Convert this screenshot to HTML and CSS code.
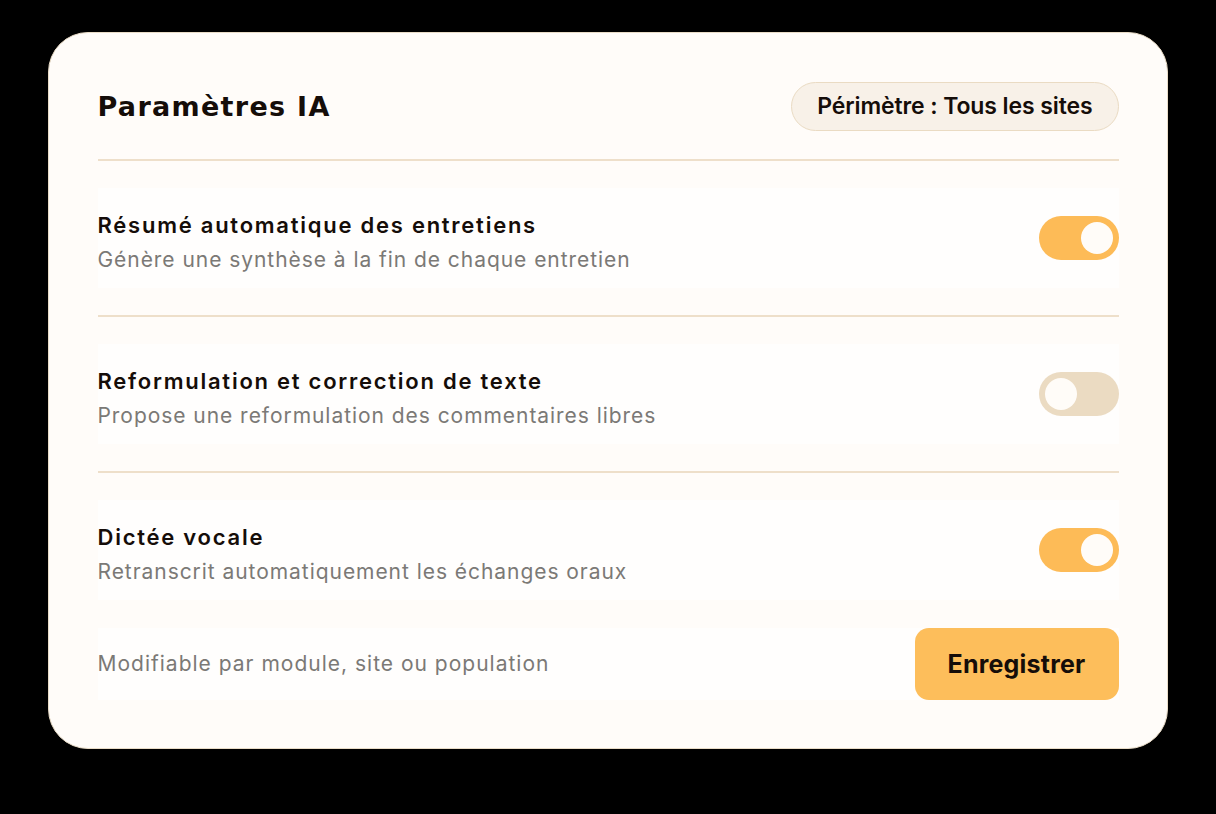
FILE: index.html
```html
<!DOCTYPE html>
<html lang="fr">
<head>
<meta charset="utf-8">
<title>Paramètres IA</title>
<link rel="stylesheet" href="styles.css">
</head>
<body>
<main class="card">
  <header class="header">
    <h1 class="title">Paramètres IA</h1>
    <span class="pill">Périmètre : Tous les sites</span>
  </header>
  <hr class="divider first">
  <section class="row">
    <div class="text">
      <div class="row-title">Résumé automatique des entretiens</div>
      <div class="row-sub">Génère une synthèse à la fin de chaque entretien</div>
    </div>
    <span class="toggle on"><span class="knob"></span></span>
  </section>
  <hr class="divider">
  <section class="row">
    <div class="text">
      <div class="row-title">Reformulation et correction de texte</div>
      <div class="row-sub">Propose une reformulation des commentaires libres</div>
    </div>
    <span class="toggle"><span class="knob"></span></span>
  </section>
  <hr class="divider">
  <section class="row">
    <div class="text">
      <div class="row-title">Dictée vocale</div>
      <div class="row-sub">Retranscrit automatiquement les échanges oraux</div>
    </div>
    <span class="toggle on"><span class="knob"></span></span>
  </section>
  <footer class="footer">
    <span class="note">Modifiable par module, site ou population</span>
    <button class="save">Enregistrer</button>
  </footer>
</main>
</body>
</html>
```
FILE: styles.css
```css
* { box-sizing: border-box; }
html, body { margin: 0; padding: 0; }
body {
  background: #000;
  width: 1216px;
  height: 814px;
  padding: 32px 48px;
  font-family: Inter, "Noto Sans", sans-serif;
  color: #150d09;
}
.card {
  width: 1120px;
  height: 717px;
  background: #fffcf9;
  border: 1.5px solid #e9dcc7;
  border-radius: 40px;
  padding: 48.5px 48.5px;
}
.header {
  display: flex;
  align-items: center;
  justify-content: space-between;
  height: 49px;
}
.title {
  margin: 0;
  font-family: "DejaVu Sans", Inter, sans-serif;
  font-size: 27px;
  font-weight: 700;
  letter-spacing: 1.3px;
}
.pill {
  height: 49px;
  padding: 0 25px;
  display: flex;
  align-items: center;
  border-radius: 999px;
  background: #f8f1e8;
  border: 1.5px solid #eadbc3;
  font-size: 23px;
  font-weight: 600;
  letter-spacing: -0.1px;
}
.divider {
  border: 0;
  height: 2px;
  background: #eedfca;
  margin: 27px 0;
}
.divider.first { margin-top: 28px; }
.row {
  display: flex;
  align-items: center;
  justify-content: space-between;
  height: 100px;
  background: #fffefd;
}
.text { padding-top: 9px; }
.row-title {
  font-size: 22px;
  font-weight: 600;
  line-height: 28px;
  letter-spacing: 1.75px;
}
.row-sub {
  margin-top: 7px;
  font-size: 21px;
  line-height: 28px;
  color: #7b7976;
  letter-spacing: 0.95px;
}
.toggle {
  width: 80px;
  height: 44px;
  border-radius: 22px;
  background: #ebdbc2;
  padding: 6px;
  display: flex;
  justify-content: flex-start;
}
.toggle.on {
  background: #fdbb57;
  justify-content: flex-end;
}
.knob {
  width: 32px;
  height: 32px;
  border-radius: 50%;
  background: #fffcf8;
}
.footer {
  margin-top: 28px;
  height: 72px;
  display: flex;
  align-items: center;
  justify-content: space-between;
  background: #fffefd;
}
.note {
  font-size: 21px;
  color: #7b7976;
  letter-spacing: 1px;
}
.save {
  width: 204px;
  height: 72px;
  border: 0;
  border-radius: 14px;
  background: #fdbe5b;
  color: #150d09;
  font-family: Inter, "Noto Sans", sans-serif;
  font-size: 25px;
  font-weight: 700;
  letter-spacing: 0.2px;
}
```
